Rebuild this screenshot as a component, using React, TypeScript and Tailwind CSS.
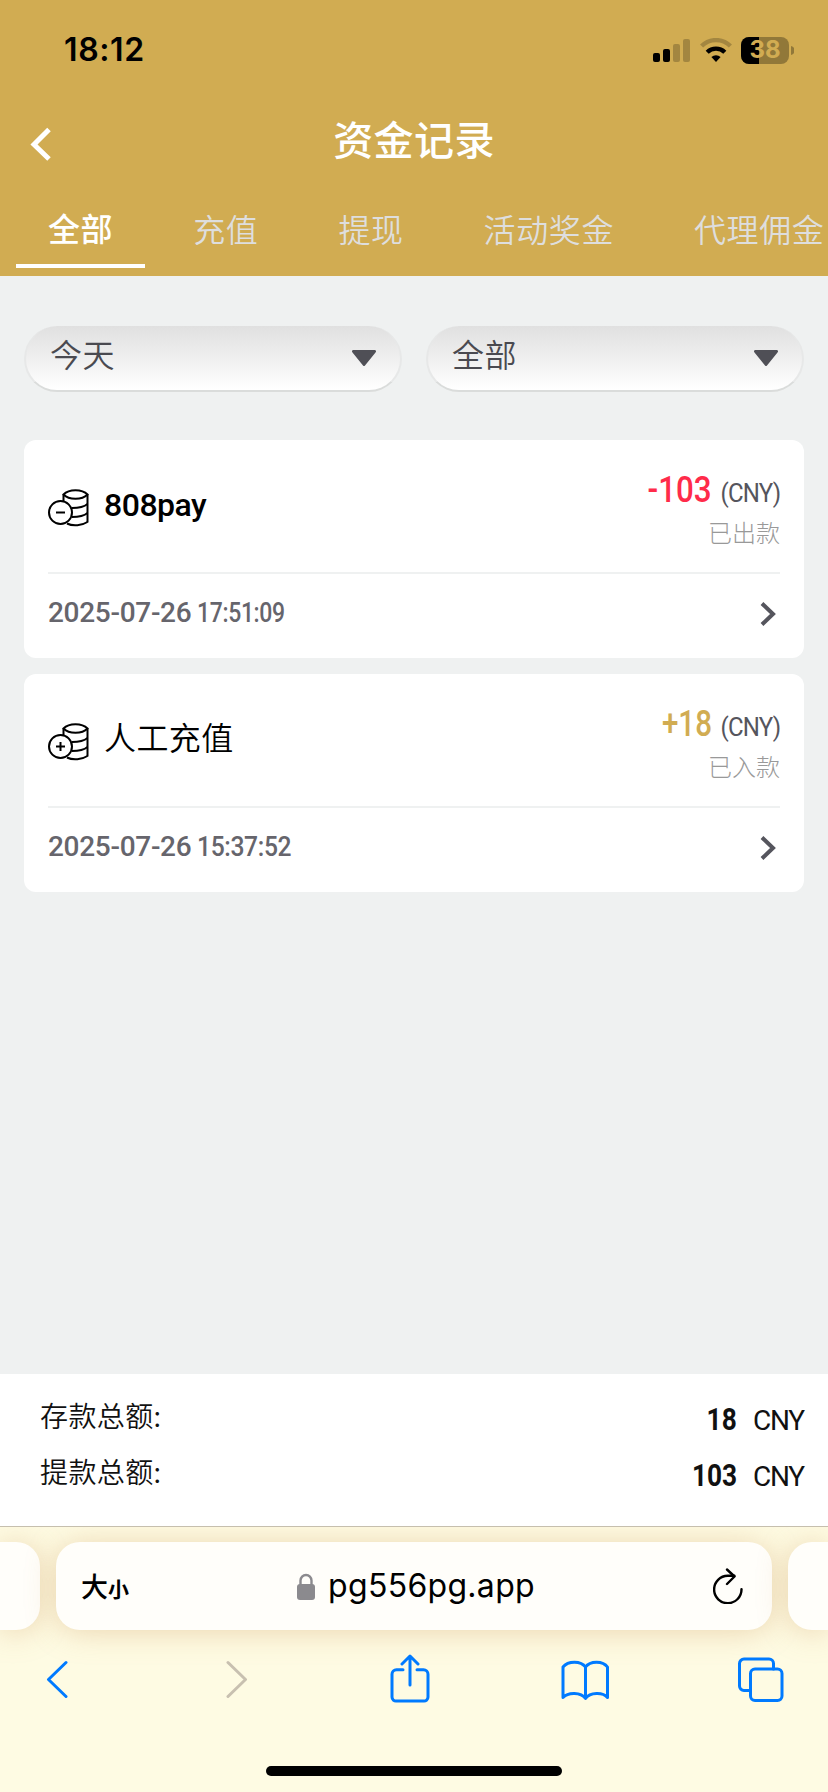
import type { ReactNode } from "react"
import clsx from "clsx"

const tabs = ["全部", "充值", "提现", "活动奖金", "代理佣金"]

const filters = ["今天", "全部"]

const records = [
  {
    title: "808pay",
    latin: true,
    sign: "minus",
    amount: "-103",
    amountClass: "scale-x-[0.87] text-[#ff2b4a]",
    status: "已出款",
    date: "2025-07-26",
    time: "17:51:09",
    timeClass: "scale-x-[0.82]",
  },
  {
    title: "人工充值",
    latin: false,
    sign: "plus",
    amount: "+18",
    amountClass: "scale-x-[0.82] text-[#d1ac52]",
    status: "已入款",
    date: "2025-07-26",
    time: "15:37:52",
    timeClass: "scale-x-[0.88]",
  },
]

const totals = [
  { label: "存款总额:", value: "18" },
  { label: "提款总额:", value: "103" },
]

function StatusBar() {
  return (
    <div className="flex h-[100px] items-center justify-between pr-[34px] pl-[64px] font-['Inter',sans-serif]">
      <span className="text-[32px] leading-none font-semibold tracking-[0.6px] text-black">18:12</span>
      <div className="flex items-center">
        <svg width="38" height="24" viewBox="0 0 38 24">
          <rect x="0" y="15" width="7" height="9" rx="2" />
          <rect x="10" y="11" width="7" height="13" rx="2" />
          <rect x="20" y="6" width="7" height="18" rx="2" opacity="0.22" />
          <rect x="30" y="1" width="7" height="23" rx="2" opacity="0.22" />
        </svg>
        <svg width="32" height="24" viewBox="0 0 32 24" className="ml-[9px]">
          <path d="M1.6 8a20.5 20.5 0 0 1 28.8 0" fill="none" stroke="#000" strokeWidth="4.4" opacity="0.22" />
          <path d="M7.2 14.2a12.6 12.6 0 0 1 17.6 0" fill="none" stroke="#000" strokeWidth="4.4" />
          <path d="M11.4 19a6.8 6.8 0 0 1 9.2 0L16 24z" />
        </svg>
        <div className="relative ml-[9px] flex h-[27px] w-12 items-center justify-center overflow-hidden rounded-lg bg-[#917839]">
          <div className="absolute inset-y-0 left-0 w-[18px] bg-black" />
          <span className="relative text-[24px] leading-none font-bold text-[#d1ac52]">38</span>
        </div>
        <svg width="3" height="9" viewBox="0 0 3 9" className="ml-[2px]">
          <path d="M0 0a4.6 4.6 0 0 1 0 9z" fill="#917839" />
        </svg>
      </div>
    </div>
  )
}

function Header() {
  return (
    <header className="h-[276px] overflow-hidden bg-[#d1ac52]">
      <StatusBar />
      <div className="grid h-[84px] grid-cols-[80px_1fr_80px] items-center">
        <svg width="22" height="34" viewBox="0 0 22 34" className="mt-[4px] ml-[29px]">
          <path d="M20 2.5 5 17.5 20 32" fill="none" stroke="#fff" strokeWidth="5" />
        </svg>
        <h1 className="-mt-[9px] text-center text-[40px] leading-[60px] font-medium tracking-[0.4px] text-white">
          资金记录
        </h1>
      </div>
      <nav className="flex gap-4 pl-4">
        {tabs.map((tab, i) => (
          <div
            key={tab}
            className={clsx(
              "h-[84px] shrink-0 border-b-4 px-8 text-[32px] tracking-[0.6px] whitespace-nowrap",
              i === 0
                ? "border-white leading-[86px] font-medium text-white"
                : "border-transparent leading-[89px] font-[350] text-[#dedede]",
            )}
          >
            {tab}
          </div>
        ))}
      </nav>
    </header>
  )
}

function CoinsIcon({ sign }: { sign: string }) {
  return (
    <svg
      width="41"
      height="38"
      viewBox="0 0 41 38"
      fill="none"
      stroke="#000"
      strokeWidth="2"
      className="mt-1"
    >
      <path d="M15.5 5.5C21-.2 34-.2 39.5 5.5 34 11.2 21 11.2 15.5 5.5z" />
      <path d="M15.5 5.5v7M39.5 5.500v28" />
      <path d="M24 19c6 0 12-1 15.500-4M24 28c6 0 12-1 15.500-4M19 34.500c6 3 15 2 20.500-1.500" />
      <circle cx="12.500" cy="23.500" r="11.500" fill="#fff" />
      <path d="M8 23.500h9" />
      {sign === "plus" && <path d="M12.500 19v9" />}
    </svg>
  )
}

function RecordCard({ record }: { record: (typeof records)[number] }) {
  return (
    <article className="h-[218px] rounded-xl bg-white px-6">
      <div className="flex h-[134px] justify-between border-b-2 border-[#eff1f1]">
        <div className="flex items-center gap-[15px]">
          <CoinsIcon sign={record.sign} />
          <span
            className={clsx(
              "text-[32px] leading-[48px] text-black",
              record.latin
                ? "-mt-[3px] font-['Roboto',sans-serif] font-medium tracking-[-0.5px]"
                : "-mt-[9px] font-[350] tracking-[0.4px]",
            )}
          >
            {record.title}
          </span>
        </div>
        <div className="pt-[30px] text-right">
          <div className="flex items-baseline justify-end font-['Roboto',sans-serif] leading-[40px]">
            <span className={clsx("origin-right text-[36px] font-medium", record.amountClass)}>{record.amount}</span>
            <span className="ml-[6px] origin-right scale-x-[0.96] text-[25px] tracking-[-0.8px] text-[#55555d]">
              (CNY)
            </span>
          </div>
          <div className="text-2xl leading-[36px] font-light text-[#999]">{record.status}</div>
        </div>
      </div>
      <div className="flex h-20 items-center justify-between pr-[4px]">
        <div className="mb-[3px] flex font-['Roboto',sans-serif] text-[28px] leading-none font-medium text-[#66656c]">
          <span className="tracking-[-0.3px]">{record.date}</span>
          <span className={clsx("ml-[6px] origin-left tracking-[-0.4px]", record.timeClass)}>{record.time}</span>
        </div>
        <svg width="16" height="24" viewBox="0 0 16 24">
          <path d="M2 1.5 13 12 2 22.5" fill="none" stroke="#55555d" strokeWidth="4" />
        </svg>
      </div>
    </article>
  )
}

function ToolIcon({ width, children, className }: { width: number; children: ReactNode; className?: string }) {
  return (
    <div className={clsx("flex w-12 justify-center", className)}>
      <svg
        width={width}
        height="50"
        viewBox={`0 0 ${width} 50`}
        fill="none"
        stroke="currentColor"
        strokeWidth="3"
        strokeLinecap="round"
        strokeLinejoin="round"
      >
        {children}
      </svg>
    </div>
  )
}

function SafariBar() {
  return (
    <footer className="flex h-[266px] flex-col overflow-hidden border-t border-[#c6bfae] bg-[#fefbe3]">
      <div className="flex gap-4 pt-[15px]">
        <div className="h-[88px] w-10 shrink-0 rounded-r-3xl bg-[#fffefa] shadow-[0_2px_30px_rgba(200,145,80,0.34)]" />
        <div className="flex h-[88px] w-[716px] shrink-0 items-center justify-between rounded-3xl bg-[#fffefa] pr-[29px] pl-[25px] shadow-[0_2px_30px_rgba(200,145,80,0.34)]">
          <div className="flex w-[60px] items-baseline font-medium text-black">
            <span className="text-[27px]">大</span>
            <span className="text-[21px] font-bold">小</span>
          </div>
          <div className="ml-[8px] flex items-center font-['Inter',sans-serif] text-[32px] text-black">
            <svg width="18" height="27" viewBox="0 0 18 27" className="mr-[13px]">
              <path d="M3.500 12V7.500a5.500 5.500 0 0 1 11 0V12" fill="none" stroke="#8b8a8e" strokeWidth="2.4" />
              <rect y="11" width="18" height="16" rx="3" fill="#8b8a8e" />
            </svg>
            <span className="tracking-[0.3px]">pg556pg.app</span>
          </div>
          <div className="flex w-[60px] justify-end">
            <svg
              width="30"
              height="36"
              viewBox="0 0 30 36"
              fill="none"
              stroke="#000"
              strokeWidth="2.4"
              strokeLinecap="round"
              strokeLinejoin="round"
            >
              <path d="M28.500 21.200A13.700 13.700 0 1 1 14.800 7.800h6.500" />
              <path d="M14 1.500 21.500 8.500 14 16" />
            </svg>
          </div>
        </div>
        <div className="h-[88px] w-10 shrink-0 rounded-l-3xl bg-[#fffefa] shadow-[0_2px_30px_rgba(200,145,80,0.34)]" />
      </div>
      <div className="mt-[24px] flex justify-between pr-[43px] pl-[33px] text-[#007aff]">
        <ToolIcon width={22}>
          <path d="M20 8.500 2.500 25.500 20 42.500" />
        </ToolIcon>
        <ToolIcon width={22} className="pl-2 text-[#c8c0b0]">
          <path d="M2 8.500 19.500 25.500 2 42.500" />
        </ToolIcon>
        <ToolIcon width={40} className="pl-[2px]">
          <path d="M13 15.700H6.500a4.500 4.500 0 0 0-4.500 4.500V43a4 4 0 0 0 4.500 4h27a4 4 0 0 0 4.500-4V20.200a4.500 4.500 0 0 0-4.500-4.500H27" />
          <path d="M20 31V2.500M12 10l8-8 8 8" />
        </ToolIcon>
        <ToolIcon width={48}>
          <path d="M24.500 13C20 6.500 7 6.500 2 13v30.500c5-5.500 18-5.500 22.500 1C29 38 42 38 46.500 43.500V13C42 6.500 29 6.500 24.500 13zM24.500 13v31" />
        </ToolIcon>
        <ToolIcon width={46}>
          <rect x="12.500" y="15" width="31.500" height="31.500" rx="4.500" />
          <path d="M12 36.500H6A4.500 4.500 0 0 1 1.500 32V9.500A4.500 4.500 0 0 1 6 5h25a4.500 4.500 0 0 1 4.500 4.500V15" />
        </ToolIcon>
      </div>
      <div className="mt-auto mb-4 h-[10px] w-[296px] self-center rounded-full bg-black" />
    </footer>
  )
}

export default function App() {
  return (
    <div className="flex h-[1792px] w-[828px] flex-col overflow-hidden bg-[#eff1f1] font-['Noto_Sans_CJK_SC',sans-serif]">
      <Header />

      <main className="flex-1 px-6 pt-[50px]">
        <div className="grid grid-cols-2 gap-6">
          {filters.map((filter) => (
            <div
              key={filter}
              className="flex h-[66px] items-start justify-between rounded-full border-x-2 border-b-2 border-x-[#e7e8e8] border-b-[#dadcdb] bg-linear-to-b from-[#e0e0e0] to-white pr-6 pl-[24px]"
            >
              <span className="text-[32px] leading-[54px] font-[350] tracking-[0.4px] text-[#4a4a50]">{filter}</span>
              <svg width="24" height="16" viewBox="0 0 24 16" className="mt-6">
                <path d="M1 0h22q2 1 .5 2.500L13 15.500q-1 1-2 0L.5 2.500Q-1 1 1 0z" fill="#4f4f56" />
              </svg>
            </div>
          ))}
        </div>

        <div className="mt-12 flex flex-col gap-4">
          {records.map((record) => (
            <RecordCard key={record.time} record={record} />
          ))}
        </div>
      </main>

      <section className="h-[152px] bg-white pt-[18px] pr-6 pl-10">
        {totals.map((total) => (
          <div key={total.label} className="flex h-14 items-center justify-between text-[#111]">
            <span className="-mt-[10px] text-[28px] font-[350] tracking-[0.4px]">{total.label}</span>
            <span className="-mt-[3px] flex items-baseline font-['Roboto',sans-serif]">
              <span className="origin-right scale-x-[0.82] text-[32px] font-bold">{total.value}</span>
              <span className="ml-[16px] text-[28px] tracking-[-1.2px]">CNY</span>
            </span>
          </div>
        ))}
      </section>

      <SafariBar />
    </div>
  )
}
